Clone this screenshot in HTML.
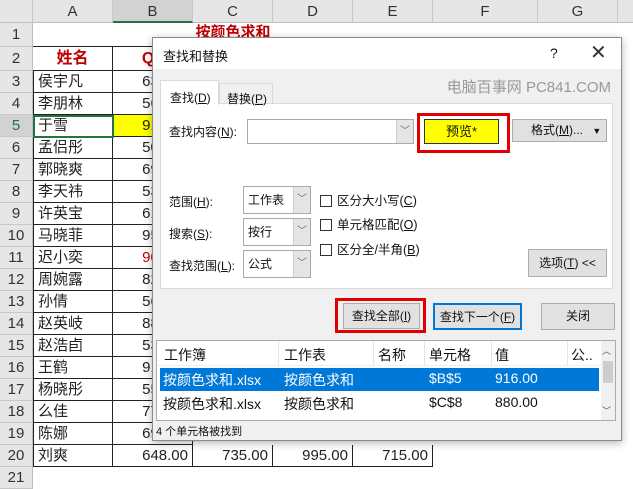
<!DOCTYPE html>
<html><head><meta charset="utf-8"><style>
*{margin:0;padding:0;box-sizing:border-box}
body{width:633px;height:475px;overflow:hidden;background:#fff;font-family:"Liberation Sans","Noto Sans CJK SC",sans-serif;position:relative}
.a{position:absolute}
.ch{position:absolute;top:0;height:23px;background:#e6e6e6;border-right:1px solid #c8c8c8;border-bottom:1px solid #bdbdbd;font-size:15px;color:#333;text-align:center;line-height:23px}
.rh{position:absolute;left:0;width:33px;background:#e6e6e6;border-bottom:1px solid #c8c8c8;border-right:1px solid #bdbdbd;font-size:15px;color:#333;text-align:center}
.c{position:absolute;border-right:1px solid #222;border-bottom:1px solid #222;font-size:15px;color:#222;white-space:nowrap;overflow:hidden}
.dlg{position:absolute;left:152px;top:37px;width:470px;height:404px;background:#f0f0f0;border:1px solid #8a8a8a;box-shadow:0 2px 8px rgba(0,0,0,.3);font-size:12px;color:#111}
.btn{position:absolute;background:#e1e1e1;border:1px solid #adadad;text-align:center;font-size:12px}
.sel{position:absolute;background:#fff;border:1px solid #aaa;font-size:12px;padding-left:4px}
.sel i{position:absolute;right:0;top:0;bottom:0;width:17px;background:#e5e5e5;border-left:1px solid #ccc;font-style:normal;color:#666;text-align:center;font-size:10px}
.cb{position:absolute;font-size:12.5px}
.cb b{display:inline-block;width:12px;height:12px;border:1px solid #333;background:#fff;vertical-align:-2px;margin-right:5px}
u{text-decoration:underline}
</style></head><body>
<div class="ch" style="left:0;width:33px"></div>
<div class="ch" style="left:33px;width:80px">A</div>
<div class="ch" style="left:113px;width:80px;background:#d2d2d2;border-bottom:2px solid #217346">B</div>
<div class="ch" style="left:193px;width:80px">C</div>
<div class="ch" style="left:273px;width:80px">D</div>
<div class="ch" style="left:353px;width:80px">E</div>
<div class="ch" style="left:433px;width:105px">F</div>
<div class="ch" style="left:538px;width:80px">G</div>
<div class="ch" style="left:618px;width:20px"></div>
<div class="rh" style="top:23px;height:24px;line-height:24px">1</div>
<div class="c" style="left:33px;top:23px;width:400px;height:24px;border-right:none;text-align:center;color:#c00000;font-weight:bold;line-height:20px;border-bottom-color:#222">按颜色求和</div>
<div id="rows"></div>
<div class="c" style="left:33px;top:47px;width:80px;height:24px;text-align:center;color:#c00000;font-weight:bold;line-height:24px;font-size:16px">姓名</div>
<div class="c" style="left:113px;top:47px;width:80px;height:24px;text-align:center;color:#c00000;font-weight:bold;line-height:24px;font-size:16px">Q1</div>
<div class="rh" style="top:47px;height:24px;line-height:24px">2</div>
<script>
var names=["侯宇凡","李朋林","于雪","孟侣彤","郭晓爽","李天祎","许英宝","马晓菲","迟小奕","周婉露","孙倩","赵英岐","赵浩卣","王鹤","杨晓彤","么佳","陈娜","刘爽"];
var vals=["632.00","568.00","916.00","508.00","695.00","535.00","612.00","954.00","905.00","826.00","563.00","885.00","532.00","918.00","557.00","774.00","695.00","648.00"];
var h="";
for(var i=0;i<18;i++){var r=i+3,t=71+i*22;
h+='<div class="rh" style="top:'+t+'px;height:22px;line-height:22px;'+(r==5?'background:#d2d2d2;color:#217346':'')+'">'+r+'</div>';
h+='<div class="c" style="left:33px;top:'+t+'px;width:80px;height:22px;line-height:22px;padding-left:4px;border-left:1px solid #222">'+names[i]+'</div>';
h+='<div class="c" style="left:113px;top:'+t+'px;width:80px;height:22px;line-height:22px;text-align:right;padding-right:4px;'+(r==5?'background:#ffff00;':'')+(r==11?'color:#c00000;':'')+'">'+vals[i]+'</div>';
if(r==20){["735.00","995.00","715.00"].forEach(function(v,k){h+='<div class="c" style="left:'+(193+k*80)+'px;top:'+t+'px;width:80px;height:22px;line-height:22px;text-align:right;padding-right:4px">'+v+'</div>';});}
}
h+='<div class="rh" style="top:467px;height:22px;line-height:22px">21</div>';
document.getElementById("rows").innerHTML=h;
</script>
<div class="a" style="left:33px;top:115px;width:81px;height:23px;border:2px solid #217346"></div>

<div class="dlg">
<div class="a" style="left:0;top:0;width:468px;height:31px;background:#fff"></div>
<div class="a" style="left:10px;top:8px;font-size:13px">查找和替换</div>
<div class="a" style="left:397px;top:7px;font-size:14px">?</div>
<div class="a" style="left:437px;top:2px;font-size:20px;color:#333">✕</div>
<div class="a" style="top:38px;font-size:15px;color:#999;white-space:nowrap;right:10px;text-align:right">电脑百事网 PC841.COM</div>
<div class="a" style="left:7px;top:65px;width:453px;height:186px;background:#fff;border:1px solid #d9d9d9"></div>
<div class="a" style="left:7px;top:42px;width:59px;height:25px;background:#fff;border:1px solid #d9d9d9;border-bottom:none;padding:8px 0 0 9px">查找(<u>D</u>)</div>
<div class="a" style="left:66px;top:45px;width:54px;height:20px;background:#f0f0f0;border:1px solid #d9d9d9;border-bottom:none;padding:6px 0 0 7px">替换(<u>P</u>)</div>
<div class="a" style="left:16px;top:85px">查找内容(<u>N</u>):</div>
<div class="sel" style="left:94px;top:81px;width:167px;height:25px"><i style="line-height:23px">﹀</i></div>
<div class="a" style="left:264px;top:75px;width:93px;height:40px;border:3px solid #e00000"></div>
<div class="a" style="left:271px;top:81px;width:75px;height:25px;background:#ffff00;border:1px solid #333;text-align:center;line-height:23px;font-size:13px">预览*</div>
<div class="btn" style="left:359px;top:81px;width:95px;height:23px;line-height:21px;text-align:left;padding-left:18px">格式(<u>M</u>)... <span style="font-size:9px;margin-left:6px">▼</span></div>
<div class="a" style="left:16px;top:155px">范围(<u>H</u>):</div>
<div class="sel" style="left:90px;top:148px;width:68px;height:28px;line-height:26px">工作表<i style="line-height:26px">﹀</i></div>
<div class="a" style="left:16px;top:187px">搜索(<u>S</u>):</div>
<div class="sel" style="left:90px;top:180px;width:68px;height:28px;line-height:26px">按行<i style="line-height:26px">﹀</i></div>
<div class="a" style="left:16px;top:219px">查找范围(<u>L</u>):</div>
<div class="sel" style="left:90px;top:212px;width:68px;height:28px;line-height:26px">公式<i style="line-height:26px">﹀</i></div>
<div class="cb" style="left:167px;top:152px"><b></b>区分大小写(<u>C</u>)</div>
<div class="cb" style="left:167px;top:176px"><b></b>单元格匹配(<u>O</u>)</div>
<div class="cb" style="left:167px;top:201px"><b></b>区分全/半角(<u>B</u>)</div>
<div class="btn" style="left:375px;top:211px;width:79px;height:28px;line-height:26px">选项(<u>T</u>) &lt;&lt;</div>
<div class="a" style="left:182px;top:260px;width:91px;height:35px;border:3px solid #e00000"></div>
<div class="btn" style="left:190px;top:265px;width:77px;height:26px;line-height:24px">查找全部(<u>I</u>)</div>
<div class="btn" style="left:280px;top:265px;width:89px;height:27px;line-height:25px;border:2px solid #0078d7">查找下一个(<u>F</u>)</div>
<div class="btn" style="left:388px;top:265px;width:74px;height:27px;line-height:25px">关闭</div>
<div class="a" style="left:3px;top:302px;width:460px;height:81px;background:#fff;border:1px solid #aaa;font-size:14px;white-space:nowrap">
 <div class="a" style="left:0;top:0;width:445px;height:25px;border-bottom:1px solid #eee"></div>
 <div class="a" style="left:7px;top:4px">工作簿</div><div class="a" style="left:127px;top:4px">工作表</div><div class="a" style="left:221px;top:4px">名称</div><div class="a" style="left:272px;top:4px">单元格</div><div class="a" style="left:338px;top:4px">值</div><div class="a" style="left:414px;top:4px">公..</div>
 <div class="a" style="left:121px;top:0;height:25px;border-left:1px solid #e5e5e5"></div><div class="a" style="left:216px;top:0;height:25px;border-left:1px solid #e5e5e5"></div><div class="a" style="left:267px;top:0;height:25px;border-left:1px solid #e5e5e5"></div><div class="a" style="left:334px;top:0;height:25px;border-left:1px solid #e5e5e5"></div><div class="a" style="left:410px;top:0;height:25px;border-left:1px solid #e5e5e5"></div>
 <div class="a" style="left:3px;top:27px;width:439px;height:23px;background:#0078d7"></div>
 <div class="a" style="left:6px;top:29px;color:#fff">按颜色求和.xlsx</div><div class="a" style="left:127px;top:29px;color:#fff">按颜色求和</div><div class="a" style="left:272px;top:29px;color:#fff">$B$5</div><div class="a" style="left:338px;top:29px;color:#fff">916.00</div>
 <div class="a" style="left:6px;top:53px">按颜色求和.xlsx</div><div class="a" style="left:127px;top:53px">按颜色求和</div><div class="a" style="left:272px;top:53px">$C$8</div><div class="a" style="left:338px;top:53px">880.00</div>
 <div class="a" style="left:444px;top:0;width:14px;height:79px;background:#f0f0f0"></div>
 <div class="a" style="left:446px;top:20px;width:10px;height:22px;background:#cdcdcd"></div>
 <div class="a" style="left:445px;top:3px;font-size:9px;color:#555">︿</div>
 <div class="a" style="left:445px;top:63px;font-size:9px;color:#555">﹀</div>
</div>
<div class="a" style="left:3px;top:385px;font-size:11px">4 个单元格被找到</div>
</div>
</body></html>
